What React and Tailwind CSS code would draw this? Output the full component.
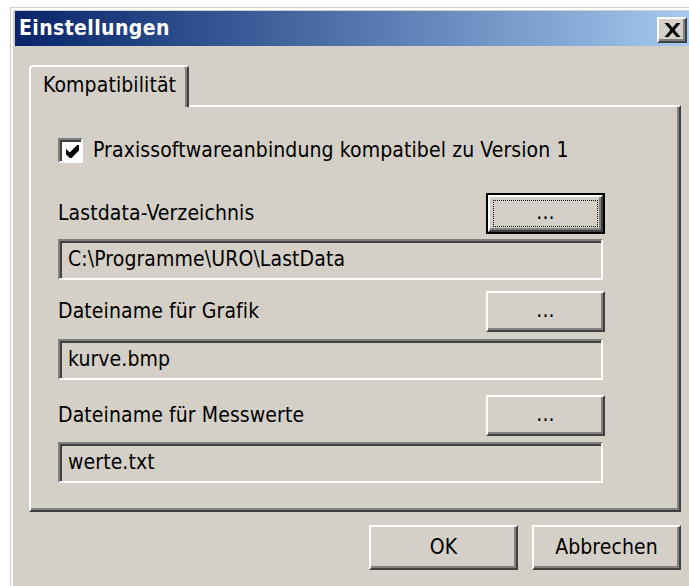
// Classic Windows "Einstellungen" settings dialog
const raised =
  "border-2 border-t-white border-l-white border-r-[#404040] border-b-[#404040] shadow-[inset_-2px_-2px_0_#808080]";
const sunken =
  "border-2 border-t-[#808080] border-l-[#808080] border-r-white border-b-white shadow-[inset_2px_2px_0_#404040]";

function CloseGlyph() {
  return (
    <svg width="17" height="14" viewBox="0 0 8 7" className="block">
      <polygon points="0,0 2,0 8,7 6,7" fill="#000" />
      <polygon points="6,0 8,0 2,7 0,7" fill="#000" />
    </svg>
  );
}

function CheckGlyph() {
  return (
    <svg width="13" height="13" viewBox="0 0 7 7" className="block">
      <polygon points="0,2 2,4 6,0 7,0 7,3 3,7 2,7 0,5" fill="#000" />
    </svg>
  );
}

function BrowseButton({ focused }) {
  if (focused) {
    return (
      <div className="h-[41px] w-[119px] border-2 border-black">
        <div className={`h-full w-full ${raised} p-[3px]`}>
          <div className="flex h-full w-full items-center justify-center border border-dotted border-black pb-[2px] leading-none">
            ...
          </div>
        </div>
      </div>
    );
  }
  return (
    <div className={`flex h-[41px] w-[119px] items-center justify-center ${raised} pb-[2px] leading-none`}>
      ...
    </div>
  );
}

function PathField({ value, className = "" }) {
  return (
    <div className={`flex h-[41px] w-[545px] items-center ${sunken} pl-[8px] leading-none ${className}`}>
      {value}
    </div>
  );
}

function FieldRow({ label, focused, className = "" }) {
  return (
    <div className={`flex h-[41px] w-[547px] items-center justify-between ${className}`}>
      <span className="leading-none">{label}</span>
      <BrowseButton focused={focused} />
    </div>
  );
}

export default function App() {
  return (
    <div className="h-[586px] w-[689px] overflow-hidden bg-white font-['DejaVu_Sans_Condensed','DejaVu_Sans',sans-serif] text-[21px] tracking-[0.1px] text-black">
      <div className="ml-[10px] mt-[7px] h-[600px] w-[690px] border-l border-t border-[#d4d0c8] bg-[#d4d0c8]">
        <div className="h-full border-l-2 border-t-2 border-white pl-[2px] pt-[1px]">
          {/* caption bar */}
          <div className="flex h-[35px] w-[677px] bg-linear-to-r from-[#0a246a] to-[#a6caf0] pl-[4px] pr-[5px]">
            <span className="self-center text-[21px] font-bold leading-none tracking-[0.4px] text-white">Einstellungen</span>
            <div className={`ml-auto mt-[6px] flex h-[26px] w-[30px] items-center justify-center bg-[#d4d0c8] ${raised}`}>
              <CloseGlyph />
            </div>
          </div>

          {/* dialog body */}
          <div className="pl-[14px] pt-[19px]">
            <div className="relative z-10 -mb-[2px] flex h-[42px] w-[160px] items-center rounded-t-[4px] border-l-2 border-r-2 border-t-2 border-l-white border-r-[#404040] border-t-white bg-[#d4d0c8] pb-[4px] pl-[12px] leading-none shadow-[inset_-2px_0_0_#808080]">
              Kompatibilität
            </div>

            <div className={`w-[652px] ${raised} pb-[27px] pl-[27px] pt-[31px]`}>
              <div className="flex h-[25px] items-center">
                <div className={`flex h-[25px] w-[25px] items-center justify-center bg-white ${sunken} pl-[3px] pt-[2px]`}>
                  <CheckGlyph />
                </div>
                <span className="ml-[10px] leading-none">Praxissoftwareanbindung kompatibel zu Version 1</span>
              </div>

              <FieldRow label="Lastdata-Verzeichnis" focused className="mt-[30px]" />
              <PathField value="C:\Programme\URO\LastData" className="mt-[5px]" />

              <FieldRow label="Dateiname für Grafik" className="mt-[11px]" />
              <PathField value="kurve.bmp" className="mt-[7px]" />

              <FieldRow label="Dateiname für Messwerte" className="mt-[15px]" />
              <PathField value="werte.txt" className="mt-[6px]" />
            </div>

            <div className="mt-[13px] flex w-[652px] justify-end gap-[14px]">
              <div className={`flex h-[45px] w-[149px] items-center justify-center ${raised} leading-none`}>OK</div>
              <div className={`flex h-[45px] w-[149px] items-center justify-center ${raised} leading-none`}>Abbrechen</div>
            </div>
          </div>
        </div>
      </div>
    </div>
  );
}
